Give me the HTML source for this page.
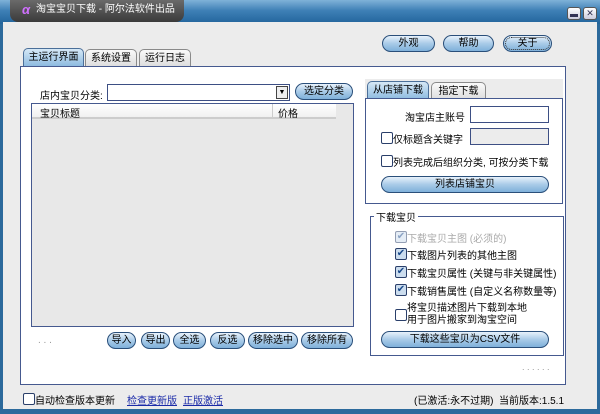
<!DOCTYPE html>
<html><head><meta charset="utf-8"><style>
*{box-sizing:border-box;margin:0;padding:0}
body{width:600px;height:414px;overflow:hidden;font-family:"Liberation Sans","Noto Sans CJK SC",sans-serif;font-size:10px;color:#000;background:#2c6a9c;position:relative}
.a{position:absolute}
.win{left:3px;top:22px;width:594px;height:387px;background:#ececec}
.title{left:0;top:0;width:600px;height:24px;background:linear-gradient(#7fb2d8,#3d7fb5 45%,#22649b)}
.tt{left:10px;top:0;width:174px;height:22px;background:linear-gradient(#6a6a6a,#3a3a3a);border-radius:0 0 8px 8px;color:#fff;font-size:10px;line-height:20px;padding-left:26px;white-space:nowrap}
.btn{position:absolute;height:17px;border:1px solid #2a4f7a;border-radius:9px;background:linear-gradient(#e8f2fb,#a9cbe8 50%,#7fb0da);text-align:center;line-height:15px;font-size:10px;white-space:nowrap}
.tab{position:absolute;height:18px;border:1px solid #8a8a8a;border-bottom:none;border-radius:5px 5px 0 0;background:linear-gradient(#fafafa,#dcdcdc);line-height:17px;text-align:center;font-size:10px}
.tab.on{background:linear-gradient(#d6e8f6,#8ebbe0);border-color:#4b6f99}
.cb{position:absolute;width:12px;height:12px;border:1px solid #2a3f6a;border-radius:2px;background:#fff}
.ck{position:absolute;width:12px;height:12px;border:1px solid #2a3f6a;border-radius:2px;background:#cde;color:#1a4a8a;font-size:10px;line-height:10px;text-align:center}
.t{position:absolute;font-size:10px;white-space:nowrap}
</style></head><body>
<div class="a title"></div>
<div class="a tt"><span style="position:absolute;left:12px;top:0;color:#d070ff;font-style:italic;font-weight:bold;font-size:13px">α</span>淘宝宝贝下载 - 阿尔法软件出品</div>
<div class="a" style="left:567px;top:7px;width:14px;height:13px;border:1px solid #555;border-radius:3px;background:linear-gradient(#fff,#ccd)"><div class="a" style="left:2px;top:6px;width:8px;height:3px;background:#335"></div></div>
<div class="a" style="left:583px;top:7px;width:14px;height:13px;border:1px solid #555;border-radius:3px;background:linear-gradient(#fff,#ccd);font-size:9px;line-height:11px;text-align:center;color:#335">✕</div>
<div class="a win"></div>
<div class="btn" style="left:382px;top:35px;width:53px">外观</div>
<div class="btn" style="left:443px;top:35px;width:51px">帮助</div>
<div class="btn" style="left:503px;top:35px;width:49px;outline:1px dotted #333;outline-offset:-3px">关于</div>
<div class="tab on" style="left:23px;top:48px;width:61px">主运行界面</div>
<div class="tab" style="left:85px;top:49px;width:52px">系统设置</div>
<div class="tab" style="left:139px;top:49px;width:52px">运行日志</div>
<div class="a" style="left:20px;top:66px;width:546px;height:319px;background:#fff;border:1px solid #45598f"></div>
<div class="t" style="left:40px;top:87px">店内宝贝分类:</div>
<div class="a" style="left:107px;top:84px;width:183px;height:17px;border:1px solid #3d4f84;background:#fff"><div class="a" style="right:1px;top:1px;width:12px;height:13px;border:1px solid #444;background:#eee;font-size:7px;text-align:center;line-height:12px">▼</div></div>
<div class="btn" style="left:295px;top:83px;width:58px">选定分类</div>
<div class="a" style="left:31px;top:103px;width:323px;height:224px;border:1px solid #45598f;background:#e8e8e8"></div>
<div class="a" style="left:32px;top:104px;width:304px;height:15px;background:linear-gradient(#fff,#f0f0f0);border-bottom:2px solid #ccc"></div>
<div class="a" style="left:272px;top:104px;width:1px;height:15px;background:#ccc"></div>
<div class="t" style="left:40px;top:105px">宝贝标题</div>
<div class="t" style="left:278px;top:105px">价格</div>
<div class="t" style="left:38px;top:335px;color:#999">. . .</div>
<div class="btn" style="left:107px;top:332px;width:29px">导入</div>
<div class="btn" style="left:141px;top:332px;width:29px">导出</div>
<div class="btn" style="left:173px;top:332px;width:33px">全选</div>
<div class="btn" style="left:210px;top:332px;width:35px">反选</div>
<div class="btn" style="left:248px;top:332px;width:50px">移除选中</div>
<div class="btn" style="left:301px;top:332px;width:52px">移除所有</div>
<div class="a" style="left:365px;top:79px;width:198px;height:19px;background:#ececec"></div>
<div class="tab on" style="left:367px;top:81px;width:62px">从店铺下载</div>
<div class="tab" style="left:431px;top:82px;width:55px">指定下载</div>
<div class="a" style="left:365px;top:98px;width:198px;height:106px;border:1px solid #45598f;background:#fff"></div>
<div class="t" style="left:405px;top:109px">淘宝店主账号</div>
<div class="a" style="left:470px;top:106px;width:79px;height:17px;border:1px solid #3d4f84;background:#fff"></div>
<div class="cb" style="left:381px;top:132px"></div><div class="t" style="left:393px;top:131px">仅标题含关键字</div>
<div class="a" style="left:470px;top:128px;width:79px;height:17px;border:1px solid #3d4f84;background:#ececec"></div>
<div class="cb" style="left:381px;top:155px"></div><div class="t" style="left:393px;top:154px">列表完成后组织分类, 可按分类下载</div>
<div class="btn" style="left:381px;top:176px;width:168px">列表店铺宝贝</div>
<div class="a" style="left:370px;top:216px;width:194px;height:140px;border:1px solid #45598f"></div>
<div class="t" style="left:374px;top:209px;background:#fff;padding:0 2px">下载宝贝</div>
<div class="ck" style="left:395px;top:231px;opacity:.5">✔</div><div class="t" style="left:407px;top:230px;color:#aaa">下载宝贝主图 (必须的)</div>
<div class="ck" style="left:395px;top:248px">✔</div><div class="t" style="left:407px;top:247px">下载图片列表的其他主图</div>
<div class="ck" style="left:395px;top:266px">✔</div><div class="t" style="left:407px;top:265px">下载宝贝属性 (关键与非关键属性)</div>
<div class="ck" style="left:395px;top:284px">✔</div><div class="t" style="left:407px;top:283px">下载销售属性 (自定义名称数量等)</div>
<div class="cb" style="left:395px;top:309px"></div><div class="t" style="left:407px;top:303px;line-height:12px">将宝贝描述图片下载到本地<br>用于图片搬家到淘宝空间</div>
<div class="btn" style="left:381px;top:331px;width:168px">下载这些宝贝为CSV文件</div>
<div class="t" style="left:522px;top:362px;color:#999;font-size:9px">. . . . . .</div>
<div class="cb" style="left:23px;top:393px"></div><div class="t" style="left:35px;top:392px">自动检查版本更新</div>
<div class="t" style="left:127px;top:392px;color:#1a2aa8;text-decoration:underline">检查更新版</div>
<div class="t" style="left:183px;top:392px;color:#1a2aa8;text-decoration:underline">正版激活</div>
<div class="t" style="left:414px;top:392px">(已激活:永不过期)&nbsp; 当前版本:1.5.1</div>
</body></html>
